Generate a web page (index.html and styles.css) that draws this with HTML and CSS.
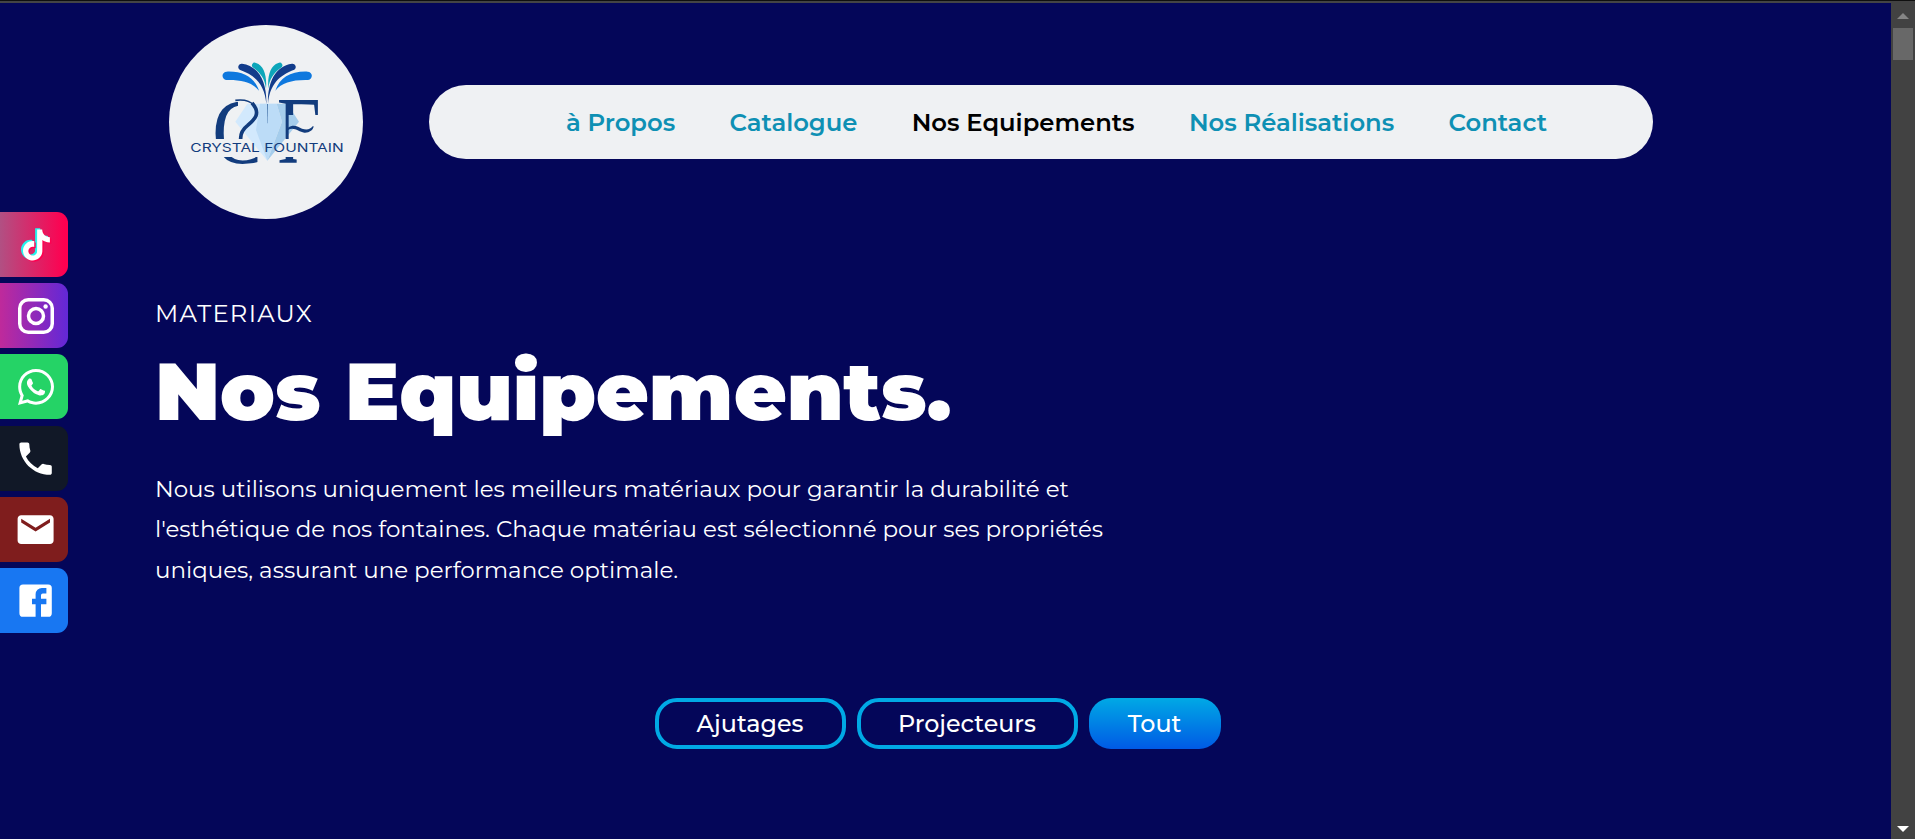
FILE: index.html
```html
<!DOCTYPE html>
<html lang="fr">
<head>
<meta charset="utf-8">
<title>Crystal Fountain</title>
<link rel="stylesheet" href="styles.css">
</head>
<body>
<div class="window">
  <div class="page">
    <header class="header">
      <a class="logo">
        <svg viewBox="27 30 582 582" width="194" height="194">
          <defs>
            <clipPath id="cut-c"><path d="M150 240H234V372H150zM190 426H293V460H190z"/></clipPath>
            <clipPath id="cut-f"><path d="M350 240H482V300H386V372H350zM350 426H410V460H350z"/></clipPath>
          </defs>
          <path fill="#d2e9fd" d="M262 266H350L322 437 226 320z"/>
          <path fill="#bcdcf7" d="M300 266H350L366 320 322 437 288 345z"/>
          <path fill="#a5cdec" d="M350 266H382L417 320 322 437 366 320z"/>
          <path fill="#0e78de" d="M297 227C278 203 246 194 200 195A12.500 12.500 0 0 1 200 170C250 168 284 188 297 227zM346 227C365 203 397 194 443 195A12.500 12.500 0 0 0 443 170C393 168 359 188 346 227z"/>
          <path fill="#123c8b" d="M319 267C314 207 285 181 239 164A10 10 0 0 1 246 146C300 153 321 207 319 267zM324 267C329 207 358 181 403 164A10 10 0 0 0 396 146C343 153 322 207 324 267z"/>
          <path fill="#0ca6ba" d="M318 221C315 190 300 172 280 158A8 8 0 0 1 288 144C312 151 321 182 318 221zM325 221C328 190 343 172 363 158A8 8 0 0 0 355 144C331 151 322 182 325 221z"/>
          <path fill="#38679f" d="M321 267H323.500L323 325H322z"/>
          <text class="monogram" x="157" y="444" font-size="278" textLength="160" lengthAdjust="spacingAndGlyphs" clip-path="url(#cut-c)">C</text>
          <path class="curl" stroke-width="5" d="M226 256C250 253 270 257 282 271"/>
          <path class="curl" stroke-width="11" d="M276 264C304 295 284 313 263 331Q241 348 242 372"/>
          <text class="monogram" x="350" y="444" font-size="284" textLength="132" lengthAdjust="spacingAndGlyphs" clip-path="url(#cut-f)">F</text>
          <path fill="#123c7d" d="M384 338C402 326 414 336 426 341C440 346 452 343 458 334H461C460 346 447 354 433 353C416 351 402 334 384 345z"/>
          <text class="wordmark" x="91" y="410" textLength="460" lengthAdjust="spacingAndGlyphs">CRYSTAL FOUNTAIN</text>
        </svg>
      </a>
      <nav class="nav">
        <a>à Propos</a>
        <a>Catalogue</a>
        <a class="active">Nos Equipements</a>
        <a>Nos Réalisations</a>
        <a>Contact</a>
      </nav>
    </header>
    <main class="content">
      <p class="eyebrow">MATERIAUX</p>
      <h1 class="title">Nos Equipements.</h1>
      <p class="intro">Nous utilisons uniquement les meilleurs matériaux pour garantir la durabilité et l'esthétique de nos fontaines. Chaque matériau est sélectionné pour ses propriétés uniques, assurant une performance optimale.</p>
      <div class="filters">
        <button class="filter ajutages">Ajutages</button>
        <button class="filter projecteurs">Projecteurs</button>
        <button class="filter tout selected">Tout</button>
      </div>
    </main>
  </div>
  <div class="scrollbar"><i class="up"></i><i class="thumb"></i><i class="down"></i></div>
</div>
<aside class="social">
  <a class="tiktok">
    <svg viewBox="0 0 24 24" width="34" height="34"><defs><path id="note" d="M12.525.02c1.310-.02 2.610-.01 3.910-.02.08 1.530.63 3.090 1.750 4.170 1.120 1.110 2.700 1.620 4.240 1.790v4.030c-1.440-.05-2.890-.35-4.200-.97-.57-.26-1.100-.59-1.620-.93-.01 2.920.01 5.840-.02 8.750-.08 1.400-.54 2.790-1.350 3.940-1.310 1.920-3.580 3.170-5.910 3.210-1.430.08-2.860-.31-4.080-1.030-2.020-1.190-3.440-3.370-3.650-5.710-.02-.5-.03-1-.01-1.490.18-1.900 1.120-3.720 2.580-4.960 1.660-1.440 3.980-2.130 6.150-1.720.02 1.480-.04 2.960-.04 4.440-.99-.32-2.150-.23-3.020.37-.63.41-1.110 1.040-1.360 1.750-.21.51-.15 1.070-.14 1.610.24 1.640 1.820 3.020 3.500 2.870 1.120-.01 2.190-.66 2.770-1.610.19-.33.4-.67.41-1.060.1-1.790.06-3.570.07-5.360.01-4.030-.01-8.050.02-12.070z"/></defs><use href="#note" fill="#25f4ee" transform="translate(0 .2) scale(.91)"/><use href="#note" fill="#fe0050" transform="translate(2.400 2) scale(.91)"/><use href="#note" fill="#fff" transform="translate(1.400 1.100) scale(.91)"/></svg>
  </a>
  <a class="instagram">
    <svg viewBox="0 0 36 36" width="36" height="36" fill="none" stroke="#fff" stroke-width="3.500"><rect x="1.750" y="1.750" width="32.500" height="32.500" rx="8.500"/><circle cx="18" cy="18" r="7.500"/><circle cx="27.600" cy="8.500" r="2.200" fill="#fff" stroke="none"/></svg>
  </a>
  <a class="whatsapp">
    <svg viewBox="0 32 448 448" width="36" height="36" fill="#fff"><path d="M380.900 97.100C339 55.100 283.200 32 223.900 32c-122.400 0-222 99.600-222 222 0 39.100 10.200 77.300 29.600 111L0 480l117.700-30.900c32.400 17.700 68.900 27 106.100 27h.1c122.300 0 224.100-99.600 224.100-222 0-59.300-25.200-115-67.100-157zm-157 341.600c-33.200 0-65.700-8.900-94-25.700l-6.700-4-69.800 18.300L72 359.200l-4.400-7c-18.500-29.400-28.200-63.300-28.200-98.200 0-101.700 82.800-184.500 184.600-184.500 49.300 0 95.600 19.200 130.400 54.100 34.800 34.900 56.200 81.200 56.100 130.500 0 101.800-84.900 184.600-186.600 184.600zm101.200-138.200c-5.500-2.800-32.800-16.200-37.900-18-5.100-1.900-8.800-2.800-12.500 2.800-3.700 5.600-14.300 18-17.600 21.800-3.200 3.700-6.500 4.200-12 1.400-32.600-16.300-54-29.100-75.500-66-5.700-9.800 5.700-9.100 16.300-30.300 1.800-3.700.9-6.900-.5-9.700-1.400-2.800-12.500-30.100-17.100-41.200-4.500-10.800-9.100-9.300-12.500-9.500-3.200-.2-6.900-.2-10.600-.2-3.700 0-9.700 1.400-14.800 6.900-5.100 5.600-19.400 19-19.400 46.300 0 27.300 19.900 53.700 22.600 57.400 2.800 3.700 39.100 59.700 94.800 83.800 35.200 15.200 49 16.500 66.600 13.900 10.700-1.600 32.800-13.400 37.400-26.400 4.600-13 4.600-24.100 3.200-26.400-1.300-2.500-5-3.900-10.500-6.600z"/></svg>
  </a>
  <a class="phone">
    <svg viewBox="0 0 24 24" width="43.200" height="43.200" fill="#fff"><path d="M6.620 10.790c1.440 2.830 3.760 5.140 6.590 6.590l2.200-2.200c.27-.27.67-.36 1.020-.24 1.120.37 2.330.57 3.570.57.55 0 1 .45 1 1V20c0 .55-.45 1-1 1-9.390 0-17-7.610-17-17 0-.55.45-1 1-1h3.500c.55 0 1 .45 1 1 0 1.250.2 2.450.57 3.570.11.35.03.74-.25 1.020l-2.200 2.200z"/></svg>
  </a>
  <a class="mail">
    <svg viewBox="0 0 24 24" width="43.200" height="43.200" fill="#fff"><path d="M20 4H4c-1.100 0-1.990.9-1.990 2L2 18c0 1.100.9 2 2 2h16c1.100 0 2-.9 2-2V6c0-1.100-.9-2-2-2zm0 4l-8 5-8-5V6l8 5 8-5v2z"/></svg>
  </a>
  <a class="facebook">
    <svg viewBox="0 0 24 24" width="43.200" height="43.200" fill="#fff"><path d="M5 3h14a2 2 0 0 1 2 2v14a2 2 0 0 1-2 2h-4v-7h3v-3h-3V9a1 1 0 0 1 1-1h2V5h-2.500A3.500 3.500 0 0 0 12 8.500V11h-2v3h2v7H5a2 2 0 0 1-2-2V5a2 2 0 0 1 2-2z"/></svg>
  </a>
</aside>
</body>
</html>
```
FILE: styles.css
```css
* { box-sizing: border-box; }
body { margin: 0; background: #040659; font-family: Montserrat, Inter, sans-serif; color: #fff; }
.window { display: flex; height: 839px; border-top: 1px solid #0f0f0f; }
.page { flex: 1; border-top: 2px solid #444; }

.scrollbar { display: flex; flex-direction: column; align-items: center; width: 24px; padding: 12px 0 7px; background: #424242; }
.up, .down { width: 0; height: 0; border: 6px solid transparent; }
.up { border-top: 0; border-bottom-color: #858585; }
.down { margin-top: auto; border-bottom: 0; border-top-color: #fff; }
.thumb { width: 20px; height: 32px; margin-top: 9px; background: #686868; }

.header { display: flex; align-items: center; gap: 66px; padding: 22px 0 0 169px; }
.logo { width: 194px; height: 194px; border-radius: 50%; background: #eff1f3; overflow: hidden; }
.logo svg { display: block; }
.monogram { font-family: "Liberation Serif", serif; fill: #123c7d; }
.curl { fill: none; stroke: #123c7d; }
.wordmark { font: 36px Inter, sans-serif; fill: #123c7d; }

.nav { display: flex; align-items: center; gap: 54.3px; width: 1224px; height: 74px; padding-left: 137px; background: #eff1f3; border-radius: 37px; font-size: 24.3px; font-weight: 600; color: #0e90b4; white-space: nowrap; }
.active { color: #000; }

.content { padding: 74px 0 0 155px; }
.eyebrow { margin: 0; font-size: 24.3px; line-height: 40.5px; letter-spacing: 1.22px; }
.title { margin: 7px 0 27px; font-size: 81px; font-weight: 900; line-height: 101px; }
.intro { width: 972px; margin: 0; font-size: 22.97px; line-height: 40.5px; }

.filters { display: flex; gap: 11px; margin: 108px 0 0 499.5px; }
.filter { height: 51px; padding: 0 0 1px; border: 4px solid #00a9e5; border-radius: 22px; background: none; color: #fff; font-family: inherit; font-size: 23.8px; font-weight: 500; }
.ajutages { width: 191px; }
.projecteurs { width: 221px; }
.tout { width: 132px; }
.selected { border: 0; background: linear-gradient(#00a9e5, #005ae5); }

.social { position: fixed; top: 212px; left: 0; display: flex; flex-direction: column; gap: 6px; }
.social a { display: flex; align-items: center; justify-content: center; width: 68px; height: 65px; padding-left: 4px; border-radius: 0 11px 11px 0; }
.tiktok { background: linear-gradient(90deg, #b15083, #ff0050 95%); }
.instagram { background: linear-gradient(90deg, #bf2a9b, #6228d7); }
.whatsapp { background: #25d366; }
.social .phone { margin-top: 1px; background: #111827; }
.mail { background: #7f1d1d; }
.facebook { background: #1877f2; }
```
